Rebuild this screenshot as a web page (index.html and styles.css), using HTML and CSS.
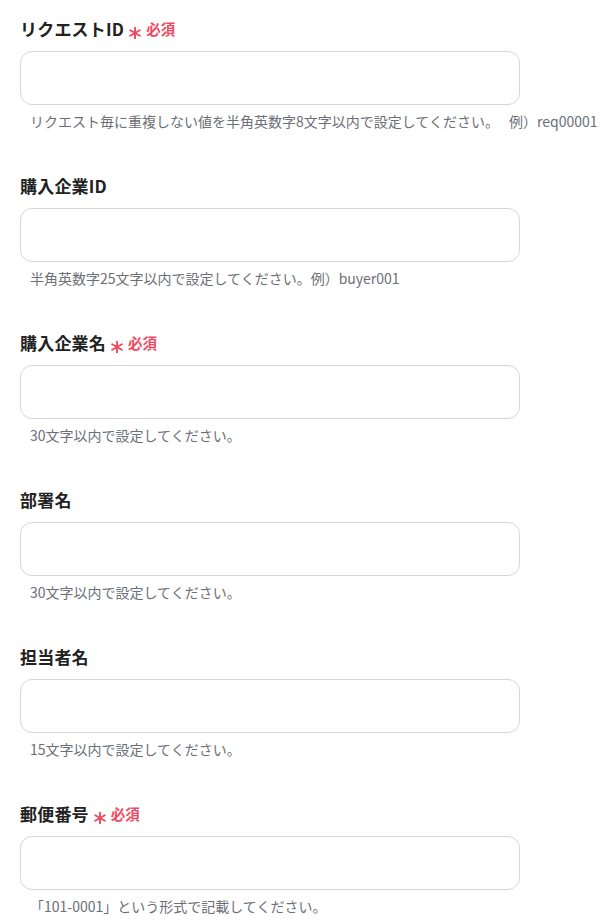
FILE: index.html
```html
<!DOCTYPE html>
<html lang="ja">
<head>
<meta charset="utf-8">
<link rel="stylesheet" href="styles.css">
</head>
<body>
<form class="form">
  <div class="field">
    <div class="label">リクエストID<span class="req"><svg class="star" viewBox="0 0 12 12"><path d="M6 0.5V11.5M1.2 3.25L10.8 8.75M1.2 8.75L10.8 3.25"/></svg>必須</span></div>
    <div class="input"></div>
    <div class="hint">リクエスト毎に重複しない値を半角英数字8文字以内で設定してください。　 例）req00001</div>
  </div>
  <div class="field">
    <div class="label">購入企業ID</div>
    <div class="input"></div>
    <div class="hint">半角英数字25文字以内で設定してください。例）buyer001</div>
  </div>
  <div class="field">
    <div class="label">購入企業名<span class="req"><svg class="star" viewBox="0 0 12 12"><path d="M6 0.5V11.5M1.2 3.25L10.8 8.75M1.2 8.75L10.8 3.25"/></svg>必須</span></div>
    <div class="input"></div>
    <div class="hint">30文字以内で設定してください。</div>
  </div>
  <div class="field">
    <div class="label">部署名</div>
    <div class="input"></div>
    <div class="hint">30文字以内で設定してください。</div>
  </div>
  <div class="field">
    <div class="label">担当者名</div>
    <div class="input"></div>
    <div class="hint">15文字以内で設定してください。</div>
  </div>
  <div class="field">
    <div class="label">郵便番号<span class="req"><svg class="star" viewBox="0 0 12 12"><path d="M6 0.5V11.5M1.2 3.25L10.8 8.75M1.2 8.75L10.8 3.25"/></svg>必須</span></div>
    <div class="input"></div>
    <div class="hint">「101-0001」という形式で記載してください。</div>
  </div>
</form>
</body>
</html>
```

FILE: styles.css
```css
html, body {
  margin: 0;
  padding: 0;
  background: #ffffff;
}
body {
  font-family: "Noto Sans CJK JP", "Noto Sans", sans-serif;
  color: #222222;
  overflow: hidden;
}
.form {
  padding: 17px 0 0 20px;
  display: flex;
  flex-direction: column;
  gap: 43px;
}
.field {
  display: flex;
  flex-direction: column;
  width: 500px;
}
.label {
  font-size: 17px;
  font-weight: 700;
  line-height: 24px;
  height: 24px;
  display: flex;
  align-items: center;
  white-space: nowrap;
  letter-spacing: 0.2px;
}
.req {
  display: inline-flex;
  align-items: center;
  color: #ef4a62;
  font-size: 14.5px;
  font-weight: 700;
  margin-left: 5px;
  letter-spacing: 0;
}
.star {
  width: 12px;
  height: 12px;
  margin-right: 5px;
  position: relative;
  top: 4px;
  fill: none;
  stroke: #ef4a62;
  stroke-width: 1.9;
  stroke-linecap: round;
}
.input {
  margin-top: 10px;
  height: 52px;
  border: 1px solid #d3d6dc;
  border-radius: 12px;
  background: #ffffff;
}
.hint {
  margin-top: 6px;
  padding-left: 10px;
  font-size: 14px;
  line-height: 20px;
  color: #6b6f76;
  white-space: nowrap;
}
```
